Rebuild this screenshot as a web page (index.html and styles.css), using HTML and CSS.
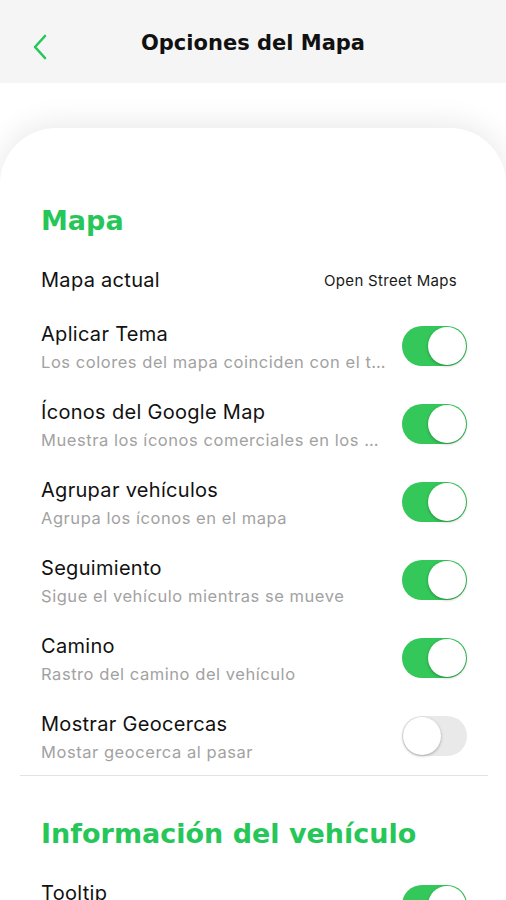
FILE: index.html
```html
<!DOCTYPE html>
<html lang="es">
<head>
  <meta charset="UTF-8" />
  <meta name="viewport" content="width=device-width,initial-scale=1" />
  <title>Opciones del Mapa</title>
  <link rel="stylesheet" href="styles.css">
</head>
<body>
  <header class="topbar">
    <button class="back" aria-label="Volver">
      <svg width="16" height="26" viewBox="0 0 16 26" fill="none">
        <path d="M13 2 L3 13 L13 24" stroke="#27c659" stroke-width="2.6" stroke-linecap="round" stroke-linejoin="round"/>
      </svg>
    </button>
    <h1>Opciones del Mapa</h1>
  </header>

  <main class="sheet">
    <section class="section first">
      <h2>Mapa</h2>

      <div class="row single">
        <div class="text"><span class="title">Mapa actual</span></div>
        <span class="value">Open Street Maps</span>
      </div>

      <div class="row">
        <div class="text">
          <span class="title">Aplicar Tema</span>
          <span class="sub">Los colores del mapa coinciden con el tema</span>
        </div>
        <span class="switch on"></span>
      </div>

      <div class="row">
        <div class="text">
          <span class="title">Íconos del Google Map</span>
          <span class="sub">Muestra los íconos comerciales en los mapas</span>
        </div>
        <span class="switch on"></span>
      </div>

      <div class="row">
        <div class="text">
          <span class="title">Agrupar vehículos</span>
          <span class="sub">Agrupa los íconos en el mapa</span>
        </div>
        <span class="switch on"></span>
      </div>

      <div class="row">
        <div class="text">
          <span class="title">Seguimiento</span>
          <span class="sub">Sigue el vehículo mientras se mueve</span>
        </div>
        <span class="switch on"></span>
      </div>

      <div class="row">
        <div class="text">
          <span class="title">Camino</span>
          <span class="sub">Rastro del camino del vehículo</span>
        </div>
        <span class="switch on"></span>
      </div>

      <div class="row">
        <div class="text">
          <span class="title">Mostrar Geocercas</span>
          <span class="sub">Mostar geocerca al pasar</span>
        </div>
        <span class="switch"></span>
      </div>
    </section>

    <hr class="divider" />

    <section class="section">
      <h2>Información del vehículo</h2>

      <div class="row">
        <div class="text">
          <span class="title">Tooltip</span>
          <span class="sub">Muestra la información al tocar el vehículo</span>
        </div>
        <span class="switch on"></span>
      </div>
    </section>
  </main>
</body>
</html>
```

FILE: styles.css
```css
body {
  margin: 0;
  padding: 0;
  background: #fff;
  font-family: Inter, "Liberation Sans", sans-serif;
  color: #111;
  overflow: hidden;
}
.topbar {
  height: 83px;
  background: #f5f5f5;
  display: flex;
  align-items: center;
  justify-content: center;
  position: relative;
}
.topbar h1 {
  margin: 0;
  font-family: "DejaVu Sans", "Open Sans", sans-serif;
  font-weight: 700;
  font-size: 21px;
  color: #111;
  padding-top: 3px;
}
.back {
  position: absolute;
  left: 32px;
  top: 34px;
  background: none;
  border: none;
  padding: 0;
  cursor: pointer;
}
.sheet {
  margin-top: 45px;
  background: #fff;
  border-radius: 56px 56px 0 0;
  box-shadow: 0 -4px 30px rgba(0, 0, 0, 0.09);
  padding-top: 75px;
}
.section h2 {
  margin: 0 0 14px;
  padding: 0 41px;
  font-family: "DejaVu Sans", "Open Sans", sans-serif;
  font-weight: 700;
  font-size: 27px;
  line-height: 36px;
  color: #27c659;
}
.section + .divider + .section {
  padding-top: 40px;
}
.row {
  height: 78px;
  display: flex;
  align-items: center;
  justify-content: space-between;
  padding: 0 39px 0 41px;
  gap: 14px;
}
.row.single {
  height: 54px;
}
.text {
  display: flex;
  flex-direction: column;
  gap: 3px;
  min-width: 0;
  flex: 1;
}
.title {
  font-size: 20px;
  line-height: 28px;
  letter-spacing: 0.3px;
  color: #111;
}
.sub {
  font-size: 16.5px;
  line-height: 22px;
  letter-spacing: 0.55px;
  color: #a2a2a2;
  white-space: nowrap;
  overflow: hidden;
  text-overflow: ellipsis;
}
.value {
  font-size: 15px;
  color: #1a1a1a;
  letter-spacing: 0.3px;
  margin-right: 10px;
}
.switch {
  flex: none;
  width: 65px;
  height: 40px;
  border-radius: 20px;
  background: #e9e9ea;
  position: relative;
}
.switch::after {
  content: "";
  position: absolute;
  top: 1px;
  left: 1px;
  width: 38px;
  height: 38px;
  border-radius: 50%;
  background: #fff;
  box-shadow: 0 1px 3px rgba(0, 0, 0, 0.3);
}
.switch.on {
  background: #34c759;
}
.switch.on::after {
  left: 26px;
}
.divider {
  border: none;
  border-top: 1px solid #e3e3e3;
  margin: 0 18px 0 20px;
}
```
